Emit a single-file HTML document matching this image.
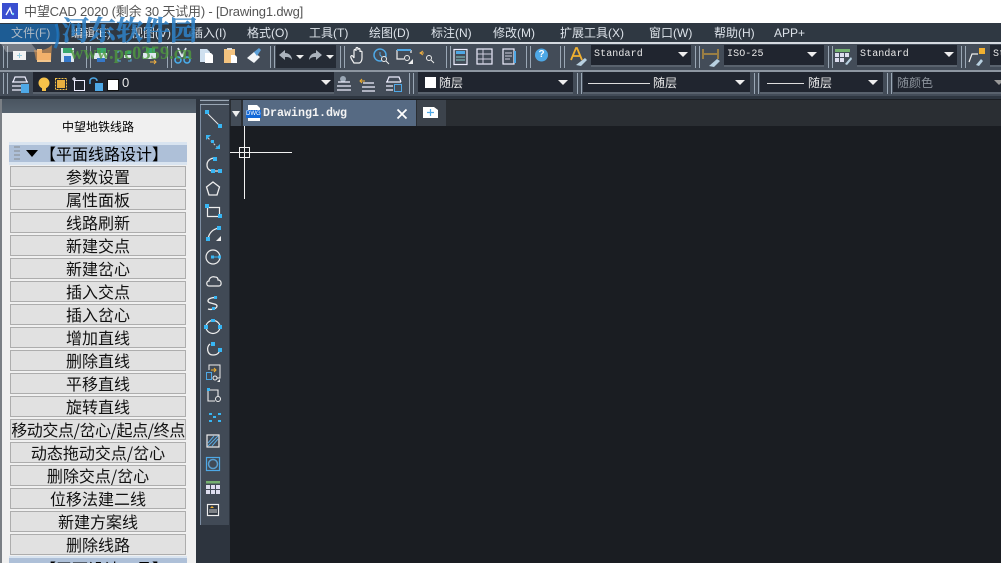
<!DOCTYPE html>
<html><head><meta charset="utf-8"><style>
html,body{margin:0;padding:0;width:1001px;height:563px;overflow:hidden;background:#1a1d22}
*{box-sizing:border-box}
body{font-family:"Liberation Sans","Noto Sans CJK SC",sans-serif;position:relative}
.a{position:absolute;white-space:nowrap}
.m{position:absolute;top:24px;height:18px;line-height:18px;font-size:12px;color:#dde3ea;white-space:nowrap;font-family:"Liberation Sans","WenQuanYi Zen Hei",sans-serif}
.b{position:absolute;left:10px;width:176px;height:21px;background:#e1e1e1;border:1px solid #adadad;color:#111;font-size:16px;line-height:18px;text-align:center;font-family:"WenQuanYi Zen Hei","Noto Sans CJK SC",sans-serif;white-space:nowrap;overflow:hidden}
.dd{position:absolute;height:22px;background:#20252f;border-bottom:2px solid #59626d;color:#e8e8e8;font-size:12px;line-height:20px;white-space:nowrap;overflow:hidden}
.t1{top:45px}.t2{top:72px}
.mono{font-family:"Liberation Mono",monospace;font-size:10px;letter-spacing:.1px;padding-left:3px}
.cj{font-family:"Liberation Sans","WenQuanYi Zen Hei",sans-serif;font-size:12px}
.ar{position:absolute;width:0;height:0;border-left:5px solid transparent;border-right:5px solid transparent;border-top:5px solid #eee}
.sp{position:absolute;width:5px;border-left:1px solid #9aa7b5;border-right:1px solid #9aa7b5}
</style></head><body>
<div class="a" style="left:0;top:0;width:1001px;height:23px;background:#fff"></div>
<svg class="a" style="left:2px;top:3px" width="16" height="16"><rect width="16" height="16" fill="#3a4fd0"/><path d="M4 12L8 5l2 6" stroke="#fff" stroke-width="1.3" fill="none"/><circle cx="11" cy="11" r="1.2" fill="#8df"/></svg>
<div class="a" style="left:24px;top:2px;height:19px;line-height:19px;font-size:13px;letter-spacing:-.18px;color:#555;font-family:'Liberation Sans','WenQuanYi Zen Hei',sans-serif">中望CAD 2020 (剩余 30 天试用) - [Drawing1.dwg]</div>

<div class="a" style="left:0;top:23px;width:1001px;height:19px;background:#2f3842"></div>
<div class="a" style="left:0;top:24px;width:58px;height:18px;background:#1d5c94"></div>
<div class="m" style="left:11px;color:#aeb9c4">文件(F)</div><div class="m" style="left:71px">编辑(E)</div><div class="m" style="left:131px">视图(V)</div><div class="m" style="left:191px">插入(I)</div><div class="m" style="left:247px">格式(O)</div><div class="m" style="left:309px">工具(T)</div><div class="m" style="left:369px">绘图(D)</div><div class="m" style="left:431px">标注(N)</div><div class="m" style="left:493px">修改(M)</div><div class="m" style="left:560px">扩展工具(X)</div><div class="m" style="left:649px">窗口(W)</div><div class="m" style="left:714px">帮助(H)</div><div class="m" style="left:774px">APP+</div>

<div class="a" style="left:0;top:42px;width:1001px;height:2px;background:#d5dae0"></div>
<div class="a" style="left:0;top:44px;width:1001px;height:26px;background:#434c58"></div>
<div class="a" style="left:0;top:70px;width:1001px;height:2px;background:#8d96a1"></div>
<div class="a" style="left:0;top:72px;width:1001px;height:24px;background:#434c58"></div>
<div class="a" style="left:0;top:96px;width:1001px;height:3px;background:#2e3640"></div>

<!-- toolbar 1 separators -->
<div class="sp" style="left:3px;top:46px;height:22px"></div><div class="sp" style="left:86px;top:46px;height:22px"></div><div class="sp" style="left:167px;top:46px;height:22px"></div><div class="sp" style="left:270px;top:46px;height:22px"></div><div class="sp" style="left:340px;top:46px;height:22px"></div><div class="sp" style="left:446px;top:46px;height:22px"></div><div class="sp" style="left:526px;top:46px;height:22px"></div><div class="sp" style="left:560px;top:46px;height:22px"></div><div class="sp" style="left:695px;top:46px;height:22px"></div><div class="sp" style="left:828px;top:46px;height:22px"></div><div class="sp" style="left:961px;top:46px;height:22px"></div>
<div class="a" style="left:276px;top:45px;width:60px;height:23px;background:#252b35"></div>

<svg class="a" style="left:0;top:44px" width="600" height="26">
<rect x="13" y="7" width="13" height="9" fill="#f2f2f2"/><path d="M19.500 9v5M17 11.500h5" stroke="#9cd" />
<path d="M37 5h5v4h9v9H37z" fill="#f3c68c"/>
<rect x="61" y="4" width="13" height="14" fill="#dfe8f0"/><rect x="63" y="4" width="9" height="5" fill="#3aa76d"/><rect x="64" y="12" width="7" height="6" fill="#3578c9"/>
<rect x="97" y="4" width="9" height="5" fill="#3aa76d"/><path d="M94 9h13v6H94z" fill="#dfe8f0"/><rect x="97" y="14" width="8" height="4" fill="#3578c9"/>
<rect x="125" y="7" width="6" height="3" fill="#3aa76d"/><path d="M118 9v-2h3M118 15v2h3M131 15v2h-3" fill="none" stroke="#5aa9d6"/><rect x="124" y="11" width="7" height="3" fill="#dfe8f0"/>
<rect x="146" y="4" width="9" height="5" fill="#3aa76d"/><path d="M143 9h13v6h-13z" fill="#dfe8f0"/><path d="M150 18h6M154 16l2 2-2 2" stroke="#f0b040" fill="none"/>
<path d="M178 4l4 9M186 4l-4 9" stroke="#dfe8f0" stroke-width="1.800"/><circle cx="178" cy="16" r="3" fill="none" stroke="#4ab0f0" stroke-width="1.500"/><circle cx="187" cy="16" r="3" fill="none" stroke="#4ab0f0" stroke-width="1.500"/>
<path d="M200 5h7l3 3v10h-10z" fill="#cfe0ef"/><path d="M205 9h6l2 2v8h-8z" fill="#fff"/>
<path d="M224 5h11v14h-11z" fill="#f3c37f"/><rect x="227" y="4" width="5" height="2" fill="#ddd"/><path d="M231 11h4l2 2v6h-6z" fill="#fff"/>
<path d="M247 14l7 5 6-6-6-5z" fill="#f2f5f8"/><path d="M254 8l5-4 2 2-4 6z" fill="#5a9fd8"/>
<path d="M279 11l6-5v3c4 0 7 3 7 7-2-3-4-3-7-3v3z" fill="#aab2bc"/><path d="M296 11h8l-4 4z" fill="#eee"/>
<path d="M322 11l-6-5v3c-4 0-7 3-7 7 2-3 4-3 7-3v3z" fill="#aab2bc"/><path d="M326 11h8l-4 4z" fill="#eee"/>
<path d="M354 19c-2-3-4-6-3-7s2 0 3 2V7c0-2 2-2 2 0V5c0-2 2-2 2 0v1c0-2 2-2 2 0v2c0-1 2-1 2 0v6c0 2-1 5-3 5z" fill="none" stroke="#f2f2f2" stroke-width="1.200"/>
<circle cx="380" cy="11" r="6" fill="none" stroke="#4ea8e6" stroke-width="1.500"/><path d="M380 8v3l2 2" stroke="#4ea8e6" fill="none"/><circle cx="384" cy="15" r="2.500" fill="#434c58" stroke="#eee"/><path d="M386 17l3 3" stroke="#eee"/>
<path d="M397 6v9h7M411 6v3" fill="none" stroke="#f0f0f0" stroke-width="1.200"/><rect x="397" y="5" width="14" height="2" fill="#4ea8e6"/><circle cx="407" cy="14" r="2.500" fill="none" stroke="#eee"/><path d="M408 20l5-5v5z" fill="#eee"/>
<path d="M423 7l-3 2 3 2M420 9h4" fill="none" stroke="#f0b040"/><circle cx="429" cy="14" r="2.500" fill="none" stroke="#eee"/><path d="M431 16l3 3" stroke="#eee"/>
<rect x="454" y="5.500" width="13" height="15" fill="none" stroke="#eef" stroke-width="1.200"/><rect x="456" y="7" width="9" height="3" fill="#4ea8e6"/><path d="M456 13h9M456 16h9" stroke="#8cc" />
<rect x="477" y="5" width="15" height="15" fill="none" stroke="#eef" stroke-width="1.200"/><path d="M483 5v15M477 10h15M477 15h15" stroke="#ccd"/>
<rect x="503" y="5" width="11" height="15" fill="none" stroke="#eef" stroke-width="1.200"/><path d="M505 9h7M505 12h7M505 15h5" stroke="#ccd"/><rect x="514" y="7" width="2" height="12" fill="#4ea8e6"/>
<circle cx="541.500" cy="11" r="6.500" fill="#4ea8e6"/>
<path d="M571 16l5-12h1l5 12M573 12h7" fill="none" stroke="#f0b030" stroke-width="1.800"/><path d="M576 21l9-7 2 2-6 6z" fill="#b8d0e0"/>
</svg>
<div class="a" style="left:538.500px;top:48px;font-size:10px;line-height:14px;font-weight:bold;color:#fff">?</div>

<!-- toolbar1 dropdowns -->
<div class="dd t1 mono" style="left:591px;width:100px">Standard<div class="ar" style="top:7px;right:3px"></div></div>
<svg class="a" style="left:702px;top:48px" width="20" height="20"><path d="M1 1v10M16 1v10M2 6h13" stroke="#f0b030" fill="none"/><path d="M7 18l8-7 3 2-6 6z" fill="#b8d0e0"/></svg>
<div class="dd t1 mono" style="left:724px;width:100px">ISO-25<div class="ar" style="top:7px;right:7px"></div></div>
<svg class="a" style="left:835px;top:49px" width="18" height="16"><rect y="0" width="15" height="3" fill="#74b06f"/><path d="M0 4h4v4H0zM5 4h4v4H5zM10 4h4v4h-4zM0 9h4v4H0zM5 9h4v4H5z" fill="#dde"/><path d="M10 15l6-7 1 2-5 6z" fill="#b8d0e0"/></svg>
<div class="dd t1 mono" style="left:857px;width:100px">Standard<div class="ar" style="top:7px;right:3px"></div></div>
<svg class="a" style="left:968px;top:48px" width="18" height="18"><rect x="11" width="6" height="6" fill="#f0b030"/><path d="M1 14l3-8h6" fill="none" stroke="#eee" stroke-width="1.200"/><path d="M8 17l5-6 2 2-4 5z" fill="#b8d0e0"/></svg>
<div class="dd t1 mono" style="left:990px;width:11px">St</div>

<!-- toolbar 2 -->
<div class="sp" style="left:3px;top:73px;height:21px"></div>
<svg class="a" style="left:10px;top:74px" width="22" height="20"><path d="M3 8l2-5h10l2 5M2 8h16M2 12h10M2 16h10" fill="none" stroke="#eef" stroke-width="1.200"/><rect x="11" y="10" width="8" height="9" fill="#4ea8e6"/></svg>
<div class="dd t2" style="left:33px;width:301px;height:22px;padding-left:89px;line-height:22px;font-size:13px">0<div class="ar" style="top:8px;right:3px"></div></div>
<svg class="a" style="left:36px;top:75px" width="90" height="18"><circle cx="8" cy="8" r="5.500" fill="#f6c24a"/><rect x="6" y="13" width="4" height="3" fill="#f6c24a"/><rect x="21" y="5" width="8" height="8" fill="#e8b040"/><rect x="19.500" y="3.500" width="11" height="11" fill="none" stroke="#f6c24a" stroke-dasharray="2 1"/><rect x="38.500" y="5.500" width="10" height="10" fill="none" stroke="#eef"/><path d="M36 4h4M38 2v4" stroke="#eef"/><path d="M54 9V6c0-4 7-4 7 0" fill="none" stroke="#4ea8e6" stroke-width="1.500"/><rect x="59" y="8" width="8" height="8" fill="#4ea8e6"/><rect x="71.500" y="4.500" width="11" height="11" fill="#fff" stroke="#111"/></svg>
<svg class="a" style="left:335px;top:74px" width="70" height="20"><circle cx="8" cy="5" r="3" fill="#9aa7b5"/><path d="M3 8h12M2 12h14M2 16h14" stroke="#eef" fill="none" stroke-width="1.200"/><path d="M27 5l-2 2 2 2M25 7h5" fill="none" stroke="#f0b030"/><path d="M28 9h11M27 13h13M27 17h13" stroke="#eef" stroke-width="1.200"/><path d="M52 8l2-5h10l2 5M51 8h15M51 12h7M51 16h7" fill="none" stroke="#eef" stroke-width="1.200"/><rect x="59.500" y="10.500" width="7" height="7" fill="none" stroke="#4ea8e6"/></svg>
<div class="sp" style="left:409px;top:73px;height:21px"></div><div class="sp" style="left:577px;top:73px;height:21px"></div><div class="sp" style="left:754px;top:73px;height:21px"></div><div class="sp" style="left:887px;top:73px;height:21px"></div>
<div class="dd t2 cj" style="left:418px;width:155px;padding-left:21px;line-height:22px">随层<div class="a" style="left:7px;top:5px;width:11px;height:11px;background:#fff"></div><div class="ar" style="top:8px;right:5px"></div></div>
<div class="dd t2 cj" style="left:583px;width:167px;padding-left:70px;line-height:22px">随层<div class="a" style="left:5px;top:11px;width:62px;height:1px;background:#ddd"></div><div class="ar" style="top:8px;right:5px"></div></div>
<div class="dd t2 cj" style="left:760px;width:123px;padding-left:48px;line-height:22px">随层<div class="a" style="left:7px;top:11px;width:37px;height:1px;background:#ddd"></div><div class="ar" style="top:8px;right:5px"></div></div>
<div class="dd t2 cj" style="left:893px;width:108px;padding-left:4px;line-height:22px;color:#8b929b">随颜色<div class="ar" style="top:8px;right:-3px;border-top-color:#999"></div></div>

<!-- left panel -->
<div class="a" style="left:0;top:99px;width:2px;height:464px;background:#7a7f85"></div>
<div class="a" style="left:2px;top:99px;width:194px;height:14px;background:linear-gradient(#4a5560,#56626e)"></div>
<div class="a" style="left:2px;top:113px;width:194px;height:450px;background:#f0f0f0"></div>
<div class="a" style="left:196px;top:99px;width:34px;height:464px;background:#2d343e"></div>
<div class="a" style="left:62px;top:119px;font-size:12px;line-height:16px;color:#000;font-family:'WenQuanYi Zen Hei','Noto Sans CJK SC',sans-serif">中望地铁线路</div>
<div class="a" style="left:9px;top:142px;width:178px;height:23px;background:#aec0d8;border-top:3px solid #d9e4f0;border-bottom:3px solid #d9e4f0"></div>
<div class="a" style="left:14px;top:146px;width:6px;height:15px;background:repeating-linear-gradient(#9aa5b2 0 2px,transparent 2px 4px)"></div>
<div class="a" style="left:26px;top:150px;width:0;height:0;border-left:6px solid transparent;border-right:6px solid transparent;border-top:7px solid #000"></div>
<div class="a" style="left:40px;top:143px;font-size:16px;line-height:20px;color:#000;font-family:'WenQuanYi Zen Hei','Noto Sans CJK SC',sans-serif">【平面线路设计】</div>
<div class="b" style="top:166px">参数设置</div>
<div class="b" style="top:189px">属性面板</div>
<div class="b" style="top:212px">线路刷新</div>
<div class="b" style="top:235px">新建交点</div>
<div class="b" style="top:258px">新建岔心</div>
<div class="b" style="top:281px">插入交点</div>
<div class="b" style="top:304px">插入岔心</div>
<div class="b" style="top:327px">增加直线</div>
<div class="b" style="top:350px">删除直线</div>
<div class="b" style="top:373px">平移直线</div>
<div class="b" style="top:396px">旋转直线</div>
<div class="b" style="top:419px;letter-spacing:-.4px">移动交点/岔心/起点/终点</div>
<div class="b" style="top:442px">动态拖动交点/岔心</div>
<div class="b" style="top:465px">删除交点/岔心</div>
<div class="b" style="top:488px">位移法建二线</div>
<div class="b" style="top:511px">新建方案线</div>
<div class="b" style="top:534px">删除线路</div>
<div class="a" style="left:9px;top:556px;width:178px;height:7px;background:#aec0d8;border-top:2px solid #d9e4f0;overflow:hidden"></div>
<div class="a" style="left:40px;top:558px;height:5px;overflow:hidden;font-size:16px;line-height:20px;color:#000;font-family:'WenQuanYi Zen Hei','Noto Sans CJK SC',sans-serif">【平面设计工具】</div>

<!-- left draw toolbar -->
<div class="a" style="left:200px;top:99px;width:29px;height:426px;background:#414a56"></div>
<div class="a" style="left:200px;top:100px;width:29px;height:5px;border-top:1px solid #9aa7b5;border-bottom:1px solid #9aa7b5"></div>
<div class="a" style="left:200px;top:105px;width:1px;height:420px;background:#7d8ea3"></div>
<svg class="a" style="left:200px;top:105px" width="28" height="420" fill="none">
<path d="M8 9l11 11" stroke="#e8e8e8" stroke-width="1"/><rect x="5" y="5" width="4" height="4" fill="#38b6f4"/><rect x="18" y="19" width="4" height="4" fill="#38b6f4"/>
<path d="M8 33l10 10" stroke="#d8d8d8" stroke-dasharray="2 2"/><path d="M6 30h5l-5 5zM20 44h-5l5-5z" fill="#38b6f4"/><rect x="11" y="35" width="3" height="3" fill="#38b6f4"/>
<path d="M15 53c-5 0-8 3-8 7 0 4 3 6 6 6h6" stroke="#e8e8e8" stroke-width="1.300"/><rect x="13" y="52" width="4" height="4" fill="#38b6f4"/><rect x="11" y="64" width="4" height="4" fill="#38b6f4"/><rect x="18" y="64" width="4" height="4" fill="#38b6f4"/>
<path d="M13 77l6.500 5-2.500 8H9l-2.500-8z" stroke="#eee" stroke-width="1.300"/>
<path d="M7.500 102.500h12v9h-12z" stroke="#eee" stroke-width="1.200"/><rect x="5" y="99" width="4" height="4" fill="#38b6f4"/><rect x="18" y="109" width="4" height="4" fill="#38b6f4"/>
<path d="M8 134c1-6 5-10 11-11" stroke="#eee" stroke-width="1.300"/><rect x="6" y="132" width="4" height="4" fill="#38b6f4"/><rect x="17" y="121" width="4" height="4" fill="#38b6f4"/><path d="M16 136l5-5v5z" fill="#eee"/>
<circle cx="13" cy="152" r="7" stroke="#eee" stroke-width="1.200"/><rect x="11" y="150.500" width="3" height="3" fill="#38b6f4"/><path d="M14 152h4" stroke="#38b6f4"/><rect x="18" y="150.500" width="3" height="3" fill="#38b6f4"/>
<path d="M9 181c-3 0-3-5 0-5 0-3 3-5 6-4 2 0 3 1 3 3 4 0 4 6 1 6z" stroke="#eee" stroke-width="1.200"/>
<path d="M17 193c-3-1-9 0-9 3s9 2 9 5-6 4-9 3" stroke="#eee" stroke-width="1.300"/><rect x="14" y="191" width="3" height="3" fill="#38b6f4"/><rect x="12" y="202" width="3" height="3" fill="#38b6f4"/>
<ellipse cx="13" cy="222" rx="7" ry="6.500" stroke="#eee" stroke-width="1.200"/><rect x="4" y="220" width="4" height="4" fill="#38b6f4"/><rect x="18" y="220" width="4" height="4" fill="#38b6f4"/><rect x="11" y="214" width="4" height="3" fill="#38b6f4"/>
<path d="M10 239c-4 3-3 11 3 11 5 0 7-3 6-6" stroke="#eee" stroke-width="1.300"/><rect x="11" y="237" width="4" height="4" fill="#38b6f4"/><rect x="18" y="243" width="4" height="4" fill="#38b6f4"/>
<path d="M9 265v-5h11v13h-3" stroke="#eee"/><path d="M11 265h5M14 263l2 2-2 2" stroke="#f0b030"/><rect x="6.500" y="267.500" width="5" height="7" stroke="#4ea8e6"/><circle cx="15" cy="273" r="2" stroke="#eee"/><path d="M17 277l3-3v3z" fill="#eee"/>
<path d="M8 285v11h7M8 285h10v6" stroke="#eee" stroke-width="1.100"/><rect x="7" y="283" width="3" height="3" fill="#38b6f4"/><circle cx="18" cy="294" r="2.500" stroke="#eee"/>
<path d="M9 308h3v2H9zM18 308h3v2h-3zM13 311h3v2h-3zM9 315h3v2H9zM18 315h3v2h-3z" fill="#38b6f4"/>
<rect x="7" y="330" width="12" height="12" stroke="#eee" stroke-width="1.200"/><path d="M8 338l6-7M8 341l10-10M12 341l6-7" stroke="#5aa9e0"/>
<rect x="6.500" y="352.500" width="13" height="13" stroke="#4ea8e6" stroke-width="1.200"/><circle cx="13" cy="359" r="4.500" stroke="#5a9fd0" stroke-width="1.500"/>
<rect x="6" y="376" width="14" height="2.500" fill="#74b06f"/><path d="M6 380h4v4H6zM11 380h4v4h-4zM16 380h4v4h-4zM6 385h4v4H6zM11 385h4v4h-4zM16 385h4v4h-4z" fill="#dde"/>
<rect x="7.500" y="399.500" width="11" height="11" fill="#2e3640" stroke="#eee" stroke-width="1.200"/><path d="M10 403l2-2 2 2z" fill="#f0b030"/><path d="M9 405h8M9 407h8" stroke="#ccc"/>
</svg>

<!-- canvas & tabs -->
<div class="a" style="left:230px;top:99px;width:771px;height:464px;background:#1a1d22"></div>
<div class="a" style="left:230px;top:100px;width:771px;height:26px;background:#2a2e33"></div>
<div class="a" style="left:231px;top:100px;width:10px;height:26px;background:#434c57"></div>
<div class="a" style="left:232px;top:111px;width:0;height:0;border-left:4px solid transparent;border-right:4px solid transparent;border-top:6px solid #eee"></div>
<div class="a" style="left:243px;top:100px;width:173px;height:26px;background:#566a83"></div>
<svg class="a" style="left:245px;top:104px" width="17" height="18"><path d="M3 1h9l3 3v13H3z" fill="#fff"/><rect x="1" y="6" width="15" height="8" fill="#1168d8"/></svg>
<div class="a" style="left:246px;top:110px;font-size:6px;line-height:8px;font-family:'Liberation Sans',sans-serif;color:#fff">DWG</div>
<div class="a" style="left:263px;top:106px;font-family:'Liberation Mono',monospace;font-weight:bold;font-size:11.670px;line-height:14px;color:#f4f4f4">Drawing1.dwg</div>
<svg class="a" style="left:396px;top:108px" width="12" height="12"><path d="M1.500 1.500l9 9M10.500 1.500l-9 9" stroke="#fff" stroke-width="1.800"/></svg>
<div class="a" style="left:417px;top:100px;width:29px;height:26px;background:#3c434c"></div>
<svg class="a" style="left:423px;top:106px" width="15" height="12"><path d="M0 1h11l4 3v8H0z" fill="#fff"/><path d="M7.500 3v7M4 6.500h7" stroke="#4ea8e6" stroke-width="1.200"/></svg>

<!-- crosshair -->
<div class="a" style="left:230px;top:152px;width:62px;height:1px;background:#f2f2f2"></div>
<div class="a" style="left:244px;top:126px;width:1px;height:73px;background:#f2f2f2"></div>
<div class="a" style="left:239px;top:147px;width:11px;height:11px;border:1px solid #f2f2f2"></div>

<!-- watermark -->
<svg class="a" style="left:0;top:14px" width="62" height="50"><path d="M56 10c3 8 3 16-1 24" fill="none" stroke="#1f77c0" stroke-width="3" opacity=".8"/><path d="M0 28h30l8 10H6z" fill="#fff" opacity=".28"/><path d="M34 36c8 1 14-1 18-5l-1 15H36z" fill="#f0a050" opacity=".55"/></svg>
<div class="a" style="left:62px;top:14px;font-size:27px;font-weight:bold;line-height:30px;color:#2f80c4;opacity:.88;-webkit-text-stroke:.5px #2f80c4;font-family:'Noto Serif CJK SC',serif">河东软件园</div>
<div class="a" style="left:70px;top:44px;font-family:'Liberation Serif',serif;font-weight:bold;font-size:18.500px;line-height:20px;color:#4f9a3e;opacity:.8">www.pc0359.cn</div>
</body></html>
